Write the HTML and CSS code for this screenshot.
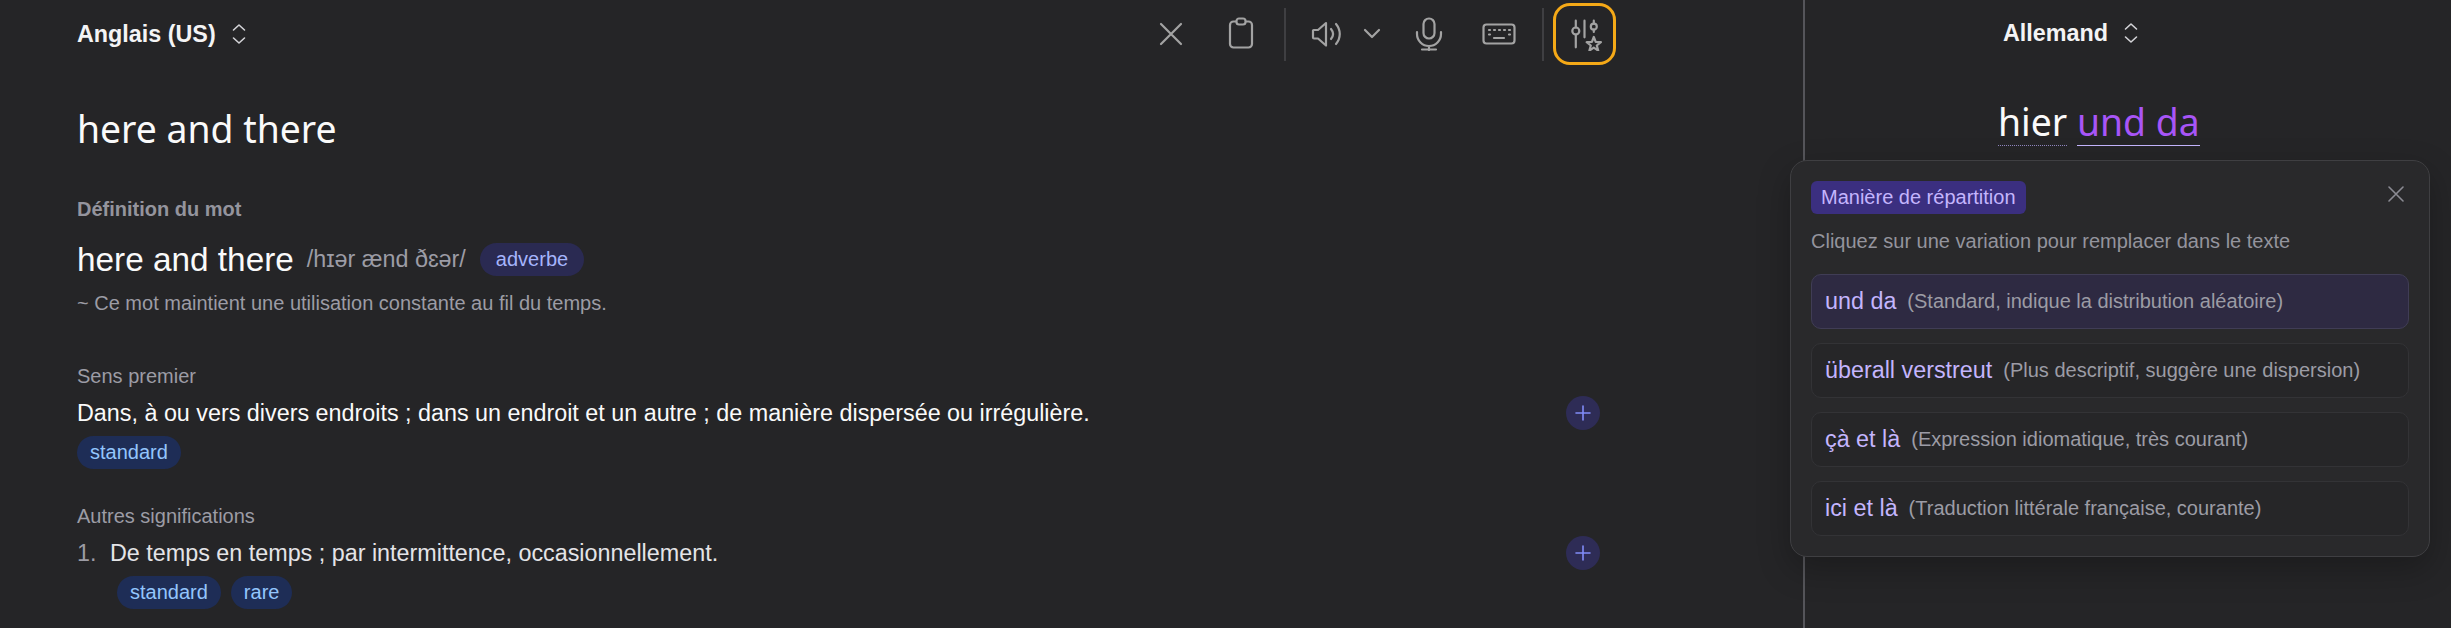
FILE: index.html
```html
<!DOCTYPE html>
<html lang="fr">
<head>
    <meta charset="UTF-8">
    <title>Traduction</title>
    <link rel="stylesheet" href="styles.css">
</head>
<body>
    <div class="app">
        <main class="source">
            <header class="top">
                <button class="lang">
                    Anglais (US)
                    <svg class="updown" width="14" height="22" viewBox="0 0 14 22"><path d="M1.500 7l5.500-5 5.500 5M1.500 15l5.500 5 5.500-5"/></svg>
                </button>
                <div class="tools">
                    <button class="tool"><svg width="30" height="30" viewBox="0 0 30 30"><path d="M5 5l20 20M25 5L5 25"/></svg></button>
                    <button class="tool"><svg width="30" height="34" viewBox="0 0 30 34"><rect x="4" y="4.500" width="22" height="26" rx="3.500"/><rect x="10.500" y="1.500" width="9" height="6" rx="2.500" class="clip"/></svg></button>
                    <span class="sep"></span>
                    <button class="tool"><svg width="32" height="30" viewBox="0 0 32 30"><path d="M2 11.500v7a1 1 0 0 0 1 1h4l8 7V4l-8 7H3a1 1 0 0 0-1 .5z"/><path d="M20 10c2.500 3 2.500 7 0 10M25 5c5 6 5 14 0 20"/></svg></button>
                    <button class="tool chevron"><svg width="18" height="12" viewBox="0 0 18 12"><path d="M2 2l7 7 7-7"/></svg></button>
                    <button class="tool"><svg width="28" height="34" viewBox="0 0 28 34"><rect x="8.500" y="1.500" width="11" height="20" rx="5.500"/><path d="M2 15v2a12 12 0 0 0 24 0v-2M14 29v4M7 32.500h14"/></svg></button>
                    <button class="tool"><svg width="34" height="22" viewBox="0 0 34 22"><rect x="1.500" y="1.500" width="31" height="19" rx="3"/><path d="M7 7h1M12 7h1M17 7h1M22 7h1M27 7h1M7 11.500h1M27 11.500h1M12 15h10"/></svg></button>
                    <span class="sep"></span>
                    <button class="tool active"><svg width="34" height="34" viewBox="0 0 34 34"><path d="M7.800 3.700v6.800M7.800 17.500v12.800M16.500 3.700v16.600M25.800 3.700v2.800M25.800 12.700v2.300"/><circle cx="7.800" cy="14" r="3.500"/><circle cx="25.800" cy="9.700" r="3"/><path d="M25.800 20l1.900 4.900 5.200.3-4.100 3.300 1.400 5.100-4.400-2.900-4.400 2.900 1.400-5.100-4.100-3.300 5.200-.3z"/></svg></button>
                </div>
            </header>

            <h1 class="word-title">here and there</h1>

            <div class="section-label">Définition du mot</div>
            <div class="word-line">
                <span class="word">here and there</span>
                <span class="phonetic">/hɪər ænd ðɛər/</span>
                <span class="pill pos">adverbe</span>
            </div>
            <p class="usage">~ Ce mot maintient une utilisation constante au fil du temps.</p>

            <div class="sense-label first">Sens premier</div>
            <div class="sense">
                <span class="sense-text">Dans, à ou vers divers endroits ; dans un endroit et un autre ; de manière dispersée ou irrégulière.</span>
                <button class="add"><svg width="16" height="16" viewBox="0 0 16 16"><path d="M8 1v14M1 8h14"/></svg></button>
            </div>
            <div class="tags">
                <span class="pill tag">standard</span>
            </div>

            <div class="sense-label other">Autres significations</div>
            <div class="sense">
                <span class="sense-text dim"><span class="num">1.</span>De temps en temps ; par intermittence, occasionnellement.</span>
                <button class="add"><svg width="16" height="16" viewBox="0 0 16 16"><path d="M8 1v14M1 8h14"/></svg></button>
            </div>
            <div class="tags indented">
                <span class="pill tag">standard</span>
                <span class="pill tag">rare</span>
            </div>
        </main>

        <aside class="target">
            <header class="top">
                <button class="lang">
                    Allemand
                    <svg class="updown" width="14" height="22" viewBox="0 0 14 22"><path d="M1.500 7l5.500-5 5.500 5M1.500 15l5.500 5 5.500-5"/></svg>
                </button>
            </header>
            <div class="translation">
                <span class="chunk">hier</span> <span class="chunk picked">und da</span>
            </div>
        </aside>

        <section class="popover">
            <div class="pop-head">
                <span class="pop-title">Manière de répartition</span>
                <button class="pop-close"><svg width="16" height="16" viewBox="0 0 16 16"><path d="M1 1l14 14M15 1L1 15"/></svg></button>
            </div>
            <p class="pop-hint">Cliquez sur une variation pour remplacer dans le texte</p>
            <div class="options">
                <div class="option selected"><span class="opt-word">und da</span><span class="opt-note">(Standard, indique la distribution aléatoire)</span></div>
                <div class="option"><span class="opt-word">überall verstreut</span><span class="opt-note">(Plus descriptif, suggère une dispersion)</span></div>
                <div class="option"><span class="opt-word">çà et là</span><span class="opt-note">(Expression idiomatique, très courant)</span></div>
                <div class="option"><span class="opt-word">ici et là</span><span class="opt-note">(Traduction littérale française, courante)</span></div>
            </div>
        </section>
    </div>
</body>
</html>
```

FILE: styles.css
```css
* {
    box-sizing: border-box;
}
html, body {
    height: 100%;
}
body {
    margin: 0;
    overflow: hidden;
    font-family: "Liberation Sans", Arial, sans-serif;
    background-color: #252527;
    color: #f4f4f5;
}
button {
    background: none;
    border: none;
    padding: 0;
    color: inherit;
    font-family: inherit;
}
svg {
    display: block;
    fill: none;
    stroke: #a3a3a3;
    stroke-width: 2.2;
    stroke-linecap: round;
    stroke-linejoin: round;
}
.app {
    position: relative;
    display: flex;
    height: 628px;
}

/* Source pane */
.source {
    width: 1805px;
    padding: 0 187px 0 77px;
    border-right: 2px solid #55555a;
}
.top {
    display: flex;
    justify-content: space-between;
    align-items: center;
    height: 68px;
}
.lang {
    display: flex;
    align-items: center;
    gap: 16px;
    font-size: 23.33px;
    font-weight: 700;
    color: #f4f4f5;
}
.updown {
    stroke: #d4d4d8;
    stroke-width: 1.6;
}
.tools {
    display: flex;
    align-items: center;
    gap: 8px;
}
.tool {
    display: flex;
    justify-content: center;
    align-items: center;
    width: 62px;
    height: 62px;
}
.chevron {
    width: 24px;
    margin: 0 6px 0 -6px;
}
.sep {
    width: 2px;
    height: 53px;
    margin: 0 2px 0 4px;
    background-color: #3f3f42;
}
.active {
    width: 63px;
    margin-left: -1px;
    border: 3px solid #f5a917;
    border-radius: 17px;
}
.clip {
    fill: #252527;
}

.word-title {
    margin: 36px 0 0;
    font-family: "Noto Sans", sans-serif;
    font-size: 37.33px;
    font-weight: 400;
    line-height: 50px;
    color: #fafafa;
}
.section-label {
    margin-top: 43px;
    font-size: 20px;
    font-weight: 700;
    line-height: 24px;
    color: #94949d;
}
.word-line {
    display: flex;
    align-items: center;
    height: 33px;
    margin-top: 22px;
}
.word {
    font-size: 33.33px;
    color: #fafafa;
}
.phonetic {
    margin-left: 13px;
    font-size: 23.33px;
    color: #9c9ca5;
}
.pill {
    display: inline-flex;
    align-items: center;
    height: 33px;
    padding: 0 16px;
    border-radius: 17px;
    font-size: 20px;
}
.pos {
    margin-left: 14px;
    background-color: #2a2a52;
    color: #a5b4fc;
}
.usage {
    margin: 15px 0 0;
    font-size: 20px;
    line-height: 24px;
    color: #9c9ca5;
}
.sense-label {
    font-size: 20px;
    line-height: 24px;
    color: #9c9ca5;
}
.first {
    margin-top: 49px;
}
.other {
    margin-top: 35px;
}
.sense {
    display: flex;
    justify-content: space-between;
    align-items: center;
    height: 34px;
    margin-top: 8px;
    padding-right: 16px;
}
.sense-text {
    font-size: 23.33px;
    color: #fafafa;
}
.dim {
    color: #e4e4e7;
}
.num {
    display: inline-block;
    width: 33px;
    color: #9c9ca5;
}
.add {
    display: flex;
    justify-content: center;
    align-items: center;
    width: 34px;
    height: 34px;
    border-radius: 50%;
    background-color: #2e2c56;
}
.add svg {
    stroke: #818cf8;
    stroke-width: 1.6;
}
.tags {
    display: flex;
    gap: 10px;
    margin-top: 6px;
}
.indented {
    padding-left: 40px;
}
.tag {
    padding: 0 13px;
    background-color: #1e2d56;
    color: #93c5fd;
}

/* Target pane */
.target {
    flex: 1;
    padding-left: 198px;
}
.target .top {
    height: 66px;
}
.translation {
    margin: 31px 0 0 -5px;
    font-family: "Noto Sans", sans-serif;
    font-size: 37.33px;
    line-height: 50px;
    color: #fafafa;
}
.chunk {
    display: inline-block;
    height: 49px;
    border-bottom: 1px dotted #8f86c0;
}
.picked {
    color: #a855f7;
    border-bottom: 1px solid #c4b5fd;
}

/* Popover over the target pane */
.popover {
    position: absolute;
    left: 1790px;
    top: 160px;
    width: 640px;
    height: 397px;
    padding: 20px 20px 0;
    background-color: #29292b;
    border: 1px solid #3f3f42;
    border-radius: 17px;
    box-shadow: 0 12px 32px rgba(0, 0, 0, 0.25);
}
.pop-head {
    display: flex;
    justify-content: space-between;
    align-items: flex-start;
}
.pop-title {
    display: flex;
    align-items: center;
    height: 33px;
    padding: 0 10px;
    border-radius: 6px;
    background-color: #3b2f80;
    color: #c4b5fd;
    font-size: 20px;
}
.pop-close {
    margin: 5px 5px 0 0;
}
.pop-close svg {
    stroke: #8b8b93;
    stroke-width: 1.6;
}
.pop-hint {
    margin: 15px 0 0;
    font-size: 20px;
    line-height: 24px;
    color: #94949d;
}
.options {
    display: flex;
    flex-direction: column;
    gap: 14px;
    margin-top: 21px;
}
.option {
    display: flex;
    align-items: center;
    gap: 11px;
    height: 55px;
    padding: 0 13px;
    border: 1px solid #333336;
    border-radius: 10px;
    background-color: #262628;
}
.selected {
    background-color: #2e2a42;
    border-color: #403d55;
}
.opt-word {
    font-size: 23.33px;
    color: #c4b5fd;
}
.opt-note {
    font-size: 20px;
    color: #9c9ca5;
}
```
